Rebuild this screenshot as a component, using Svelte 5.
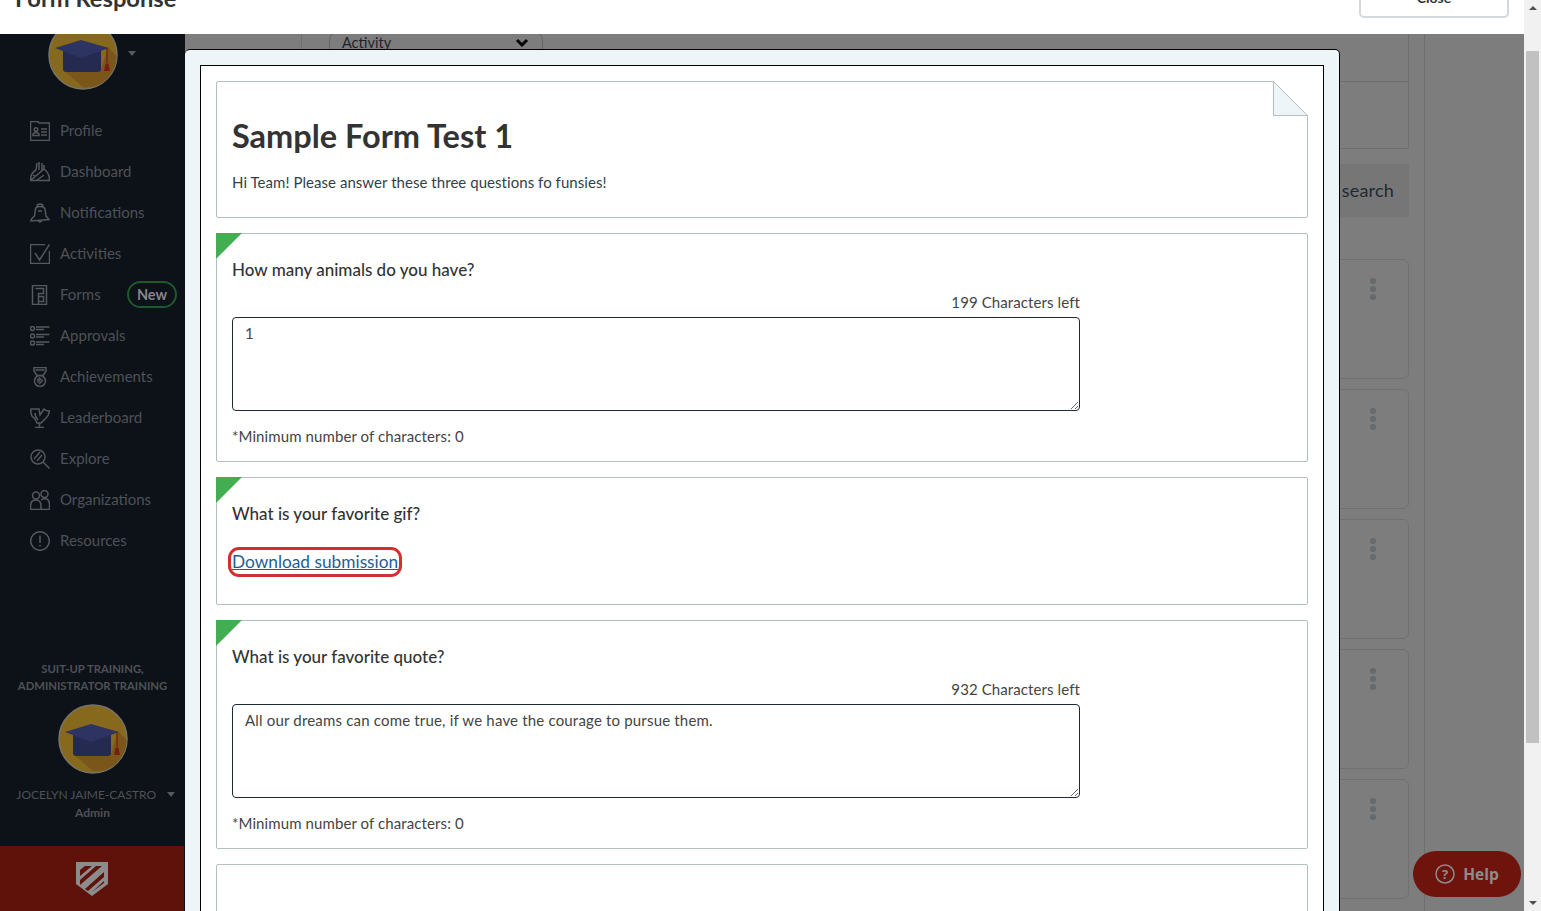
<svelte:options runes={true} />

<script>
  const navItems = [
    { label: 'Profile', icon: 'profile' },
    { label: 'Dashboard', icon: 'dashboard' },
    { label: 'Notifications', icon: 'bell' },
    { label: 'Activities', icon: 'check' },
    { label: 'Forms', icon: 'forms', isNew: true },
    { label: 'Approvals', icon: 'approvals' },
    { label: 'Achievements', icon: 'medal' },
    { label: 'Leaderboard', icon: 'trophy' },
    { label: 'Explore', icon: 'explore' },
    { label: 'Organizations', icon: 'people' },
    { label: 'Resources', icon: 'info' },
  ]

  const bgCards = [1, 2, 3, 4, 5]
</script>

{#snippet avatar()}
  <svg class="avatar" viewBox="0 0 70 70" aria-hidden="true">
    <circle cx="35" cy="35" r="34" fill="#86691c" stroke="#77746a" stroke-width="1.5" />
    <path d="M15 50 L35 67 Q47 69 58 60 Q69 48 68.500 36 L60 27 L53 50 Z" fill="#7b561a" />
    <path d="M15 26 H53 V49 Q53 52 50 52 H18 Q15 52 15 49 Z" fill="#252a50" />
    <path d="M7 28 L33 20 L61 28 L33 38 Z" fill="#2d3461" />
    <path d="M59 28 V44" stroke="#7a1d12" stroke-width="1.2" />
    <path d="M57.500 44 H60.500 L62 51 H56 Z" fill="#7a1d12" />
  </svg>
{/snippet}

{#snippet navIcon(name)}
  <svg class="nav-icon" viewBox="0 0 20 20" aria-hidden="true">
    {#if name === 'profile'}
      <path d="M.5 .5 H8 L9 2 H19.500 V19.500 H.5 Z M11 8 H17 M11 11 H17 M11 14 H17 M3 14.500 H9 V13 Q8 11.500 6 11.500 Q4 11.500 3 13 Z" />
      <circle cx="6" cy="8.500" r="1.800" />
    {:else if name === 'dashboard'}
      <path d="M.5 18.500 Q.5 11 6 8 L7 1 M9 8 V0 M12 8 V1 M14 8 V3 M14 7 Q19.500 11 19.500 18.500 H.5 Z M7 18 L14 13 M3 13 L5 14.500" />
    {:else if name === 'bell'}
      <path d="M7 3.500 Q7 1 10 1 Q13 1 13 3.500 M4.500 13 L5.500 6 Q6 3.500 10 3.500 Q14 3.500 15 6 L16 13 L19 16.500 L1 18 L1.500 16 Z M8 18 Q10 20 12 17.500 M8 8 H12" />
    {:else if name === 'check'}
      <path d="M15 .5 H.5 V19.500 H19.500 V7 M5 9 L9.500 16 L19.500 .5" />
    {:else if name === 'forms'}
      <path d="M2.500 .5 H16.500 V19.500 H2.500 Z M5.500 3.500 H13.500 V8.500 H8.500 V19 M8.500 11.500 H13.500 V16.500 H8.500" />
    {:else if name === 'approvals'}
      <circle cx="2.500" cy="2.500" r="2" />
      <circle cx="2.500" cy="10" r="2" />
      <circle cx="2.500" cy="17" r="2" />
      <path d="M6 1 H19.500 M6 3.500 H14 M6 8.500 H19.500 M6 11 H14 M6 16 H19.500 M6 18.500 H14" />
    {:else if name === 'medal'}
      <path d="M4 .5 H16 V4 L13 8.500 H7 L4 4 Z M5.500 3 H14.500" />
      <circle cx="10" cy="14" r="5.500" />
      <path d="M7.500 15.500 L11.500 11.500 M9 17 L13 13 M7 13.500 L10 10.500" />
    {:else if name === 'trophy'}
      <path d="M5 1 H1 Q.5 5 2 8 L5 11 L7 15 H11 L16 10 Q19 7 19.500 3 L16 2.500 M5 1 H9 L10 7 L14 1 L16 2.500 M5 5 Q5 9 8 12 M9.500 15 V19 M5 19.500 H14" />
    {:else if name === 'explore'}
      <circle cx="8" cy="8" r="7" />
      <path d="M13 13 L19.500 19.500 M4 10 L10 3 M7 12 L12 6" />
    {:else if name === 'people'}
      <circle cx="6" cy="5.500" r="3.500" />
      <circle cx="14.500" cy="4" r="3.500" />
      <path d="M.5 16 Q.5 10 6 10 Q11 10 11 16 V19.500 H.5 Z M11 10 Q13 8.500 15 8.500 Q19.500 9 19.500 15 V19.500 H11" />
    {:else if name === 'info'}
      <circle cx="10" cy="10" r="9.300" />
      <path d="M10 4.500 V12 M10 14 V15.500" />
    {/if}
  </svg>
{/snippet}

{#snippet triangle()}
  <svg class="triangle" viewBox="0 0 26 26" aria-hidden="true">
    <polygon points="0,0 26,0 0,26" fill="#43ad52" />
  </svg>
{/snippet}

<div class="page">
  <header class="topbar">
    <h1>Form Response</h1>
    <button class="close">Close</button>
  </header>

  <div class="content">
    <aside class="sidebar">
      <div class="brand">
        {@render avatar()}
        <span class="caret brand-caret"></span>
      </div>

      <nav>
        {#each navItems as item}
          <div class="nav-item">
            {@render navIcon(item.icon)}
            <span class="nav-label">{item.label}</span>
            {#if item.isNew}
              <span class="new-pill">New</span>
            {/if}
          </div>
        {/each}
      </nav>

      <div class="user">
        <div class="org">SUIT-UP TRAINING,<br />ADMINISTRATOR TRAINING</div>
        {@render avatar()}
        <div class="user-name">JOCELYN JAIME-CASTRO <span class="caret"></span></div>
        <div class="user-role">Admin</div>
      </div>

      <div class="shield-bar">
        <svg width="34" height="36" viewBox="0 0 34 36" aria-hidden="true">
          <path d="M1 1 H33 V23 L17 35 L1 23 Z" fill="#8c8c8c" />
          <path d="M5 15 L17 5 H10 L5 9 Z M5 24 L27 5 H21 L5 19 Z M10 28 L29 11 V16 L13 30 Z M17 31 L29 20 V22 L17 31 Z" fill="#5e120a" />
        </svg>
      </div>
    </aside>

    <main class="backdrop">
      <div class="bg-column">
        <div class="bg-top">
          <div class="bg-select">
            <span>Activity</span>
            <svg width="14" height="10" viewBox="0 0 14 10" aria-hidden="true">
              <path d="M2 2 L7 7 L12 2" fill="none" stroke="#000" stroke-width="3" />
            </svg>
          </div>
        </div>
        <div class="bg-row"></div>
        <div class="bg-search">search</div>
        <div class="bg-cards">
          {#each bgCards as card (card)}
            <div class="bg-card">
              <span class="dots"><i></i><i></i><i></i></span>
            </div>
          {/each}
        </div>
      </div>
    </main>
  </div>

  <section class="modal">
    <div class="modal-inner">
      <article class="card title-card">
        <svg class="fold" viewBox="0 0 35 35" aria-hidden="true">
          <polygon points="0,0 35,0 35,35" fill="#fff" />
          <polygon points=".5,.5 34.500,34.500 .5,34.500" fill="#eef5f8" stroke="#b6bfc0" />
        </svg>
        <h2>Sample Form Test 1</h2>
        <p>Hi Team! Please answer these three questions fo funsies!</p>
      </article>

      <article class="card">
        {@render triangle()}
        <h3>How many animals do you have?</h3>
        <div class="field">
          <div class="counter">199 Characters left</div>
          <textarea readonly>1</textarea>
        </div>
        <div class="minimum">*Minimum number of characters: 0</div>
      </article>

      <article class="card upload-card">
        {@render triangle()}
        <h3>What is your favorite gif?</h3>
        <a class="download" href="#submission">Download submission</a>
      </article>

      <article class="card">
        {@render triangle()}
        <h3>What is your favorite quote?</h3>
        <div class="field">
          <div class="counter">932 Characters left</div>
          <textarea readonly>All our dreams can come true, if we have the courage to pursue them.</textarea>
        </div>
        <div class="minimum">*Minimum number of characters: 0</div>
      </article>

      <article class="card empty-card"></article>
    </div>
  </section>

  <button class="help">
    <svg width="20" height="20" viewBox="0 0 20 20" aria-hidden="true">
      <circle cx="10" cy="10" r="9" fill="none" stroke="#8d8d8d" stroke-width="1.500" />
      <text x="10" y="14.500" text-anchor="middle" class="help-mark">?</text>
    </svg>
    Help
  </button>

  <div class="scrollbar">
    <span class="arrow up"></span>
    <div class="track"><div class="thumb"></div></div>
    <span class="arrow down"></span>
  </div>
</div>

<style>
  :global(body) {
    margin: 0;
    overflow: hidden;
    font-family: Lato, 'Noto Sans', sans-serif;
    color: #333f48;
  }

  .page {
    position: relative;
    width: 1541px;
    height: 911px;
    overflow: hidden;
    padding-right: 17px;
    box-sizing: border-box;
    display: flex;
    flex-direction: column;
  }

  .topbar {
    height: 34px;
    flex: none;
    display: flex;
    justify-content: space-between;
    align-items: flex-end;
    background: #fff;
    padding: 0 15px 0 15px;
  }

  .topbar h1 {
    margin: 0 0 21px;
    font-size: 23.700px;
    line-height: 30px;
    font-weight: 700;
    color: #333;
  }

  .close {
    width: 150px;
    height: 40px;
    margin-bottom: 16px;
    background: #fff;
    border: 2px solid #d3d8db;
    border-radius: 5px;
    font: 700 14px/14px Lato, sans-serif;
    color: #333;
    padding: 0;
  }

  .content {
    flex: 1;
    display: flex;
    min-height: 0;
  }

  .sidebar {
    width: 185px;
    flex: none;
    background: #0d1118;
    display: flex;
    flex-direction: column;
    overflow: hidden;
  }

  .avatar {
    display: block;
    width: 70px;
    height: 70px;
  }

  .brand {
    display: flex;
    align-items: center;
    margin: -14px 0 0 48px;
    gap: 4px;
  }

  .brand-caret {
    margin-bottom: 4px;
  }

  .caret {
    display: inline-block;
    width: 0;
    height: 0;
    border-left: 4.500px solid transparent;
    border-right: 4.500px solid transparent;
    border-top: 5px solid #55585c;
    vertical-align: 2px;
    margin-left: 6px;
  }

  nav {
    margin-top: 20px;
  }

  .nav-item {
    height: 41px;
    display: flex;
    align-items: center;
    padding-left: 30px;
    color: #4e5257;
    font-size: 15px;
  }

  .nav-icon {
    width: 20px;
    height: 20px;
    flex: none;
    fill: none;
    stroke: #55585c;
    stroke-width: 1.500;
  }

  .nav-label {
    margin: 0 0 2px 10px;
  }

  .new-pill {
    margin-left: auto;
    margin-right: 8px;
    width: 50px;
    height: 27px;
    box-sizing: border-box;
    border: 2px solid #1c5a2c;
    border-radius: 14px;
    display: flex;
    align-items: center;
    justify-content: center;
    font-weight: 700;
    font-size: 14.500px;
    color: #83878a;
  }

  .user {
    margin-top: auto;
    display: flex;
    flex-direction: column;
    align-items: center;
    color: #4e5257;
    font-size: 12px;
    text-align: center;
    padding-bottom: 24px;
  }

  .org {
    font-size: 11.300px;
    font-weight: 700;
    line-height: 17px;
    margin-bottom: 10px;
  }

  .user-name {
    margin-top: 12px;
    line-height: 18px;
    padding-left: 6px;
  }

  .user-name .caret {
    margin-left: 7.500px;
  }

  .user-role {
    line-height: 18px;
    font-weight: 700;
  }

  .shield-bar {
    height: 65px;
    flex: none;
    background: #5e120a;
    margin-right: 1px;
    display: flex;
    align-items: center;
    justify-content: center;
  }

  .backdrop {
    flex: 1;
    background: #7d7d7d;
    overflow: hidden;
    min-width: 0;
  }

  .bg-column {
    width: 1240px;
    height: 100%;
    box-sizing: border-box;
    border-right: 1px solid #6f6f6f;
    padding: 0 15px 0 116px;
    font-size: 16px;
  }

  .bg-top {
    display: flow-root;
    height: 48px;
    box-sizing: border-box;
    border-left: 1px solid #6f6f6f;
    border-right: 1px solid #6f6f6f;
    border-bottom: 1px solid #6f6f6f;
    padding-left: 27px;
  }

  .bg-select {
    width: 214px;
    height: 22px;
    margin-top: -2px;
    box-sizing: border-box;
    border: 1px solid #636363;
    border-radius: 8px;
    padding: 0 13px 0 12px;
    display: flex;
    justify-content: space-between;
    align-items: center;
    color: #1f252b;
    font-size: 14.500px;
    line-height: 18px;
  }

  .bg-row {
    height: 67px;
    box-sizing: border-box;
    border-right: 1px solid #6f6f6f;
    border-bottom: 1px solid #6f6f6f;
  }

  .bg-search {
    margin-top: 15px;
    height: 53px;
    background: #767676;
    display: flex;
    align-items: center;
    justify-content: flex-end;
    padding: 0 15px 2px 0;
    box-sizing: border-box;
    color: #1f2a33;
    font-size: 18px;
    letter-spacing: 0.2px;
  }

  .bg-cards {
    margin-top: 42px;
    display: flex;
    flex-direction: column;
    gap: 10px;
  }

  .bg-card {
    height: 120px;
    box-sizing: border-box;
    border: 1px solid #707070;
    border-radius: 6px;
    display: flex;
    justify-content: flex-end;
    padding: 18px 32px 0 0;
  }

  .dots {
    display: flex;
    flex-direction: column;
    gap: 2px;
  }

  .dots i {
    width: 6px;
    height: 6px;
    border-radius: 50%;
    background: #646a6e;
  }

  /* overlay */
  .modal {
    position: absolute;
    left: 185px;
    top: 49px;
    width: 1155px;
    height: 880px;
    box-sizing: border-box;
    background: #eef5f8;
    border: 1px solid #000;
    border-left: 0;
    border-radius: 5px;
    padding: 15px 15px 0 15px;
  }

  .modal-inner {
    height: 100%;
    box-sizing: border-box;
    background: #fff;
    border: 1px solid #000;
    padding: 15px;
    display: flex;
    flex-direction: column;
    gap: 15px;
  }

  .card {
    position: relative;
    flex: none;
    border: 1px solid #b6bfc0;
    border-radius: 2px;
    padding: 26px 15px 15px;
  }

  .title-card {
    padding: 34px 15px 25px;
  }

  .upload-card {
    padding-bottom: 30px;
  }

  .empty-card {
    height: 80px;
  }

  .fold {
    position: absolute;
    top: -1px;
    right: -1px;
    width: 35px;
    height: 35px;
  }

  .triangle {
    position: absolute;
    top: -1px;
    left: -1px;
    width: 26px;
    height: 26px;
  }

  h2 {
    margin: 0;
    font-size: 32.500px;
    line-height: 40px;
    font-weight: 700;
    color: #333;
  }

  .title-card p {
    margin: 16px 0 0;
    font-size: 15px;
    line-height: 20px;
    letter-spacing: 0.05px;
  }

  h3 {
    margin: 0;
    font-size: 17px;
    line-height: 20px;
    font-weight: 500;
    color: #333;
  }

  .field {
    width: 848px;
    margin-top: 12px;
  }

  .counter {
    text-align: right;
    font-size: 15px;
    line-height: 20px;
    margin-bottom: 5px;
    color: #444;
    letter-spacing: 0.1px;
  }

  textarea {
    display: block;
    width: 848px;
    height: 94px;
    box-sizing: border-box;
    border: 1px solid #1d2b38;
    border-radius: 4px;
    padding: 5px 12px;
    margin: 0;
    font: 15px/20px Lato, sans-serif;
    letter-spacing: 0.18px;
    color: #444;
    outline: none;
  }

  .minimum {
    margin-top: 15px;
    font-size: 15px;
    line-height: 20px;
    color: #444;
    letter-spacing: 0.1px;
  }

  .download {
    display: block;
    width: max-content;
    margin: 26px 0 0 -1px;
    padding: 0 1px;
    font-size: 17.300px;
    line-height: 24px;
    color: #1f5f94;
    text-decoration: underline;
    outline: 3px solid #d32f2f;
    border-radius: 8px;
  }

  .help {
    position: absolute;
    left: 1413px;
    top: 851px;
    width: 108px;
    height: 46px;
    border: 0;
    border-radius: 23px;
    background: #6f140c;
    color: #8d8d8d;
    font: 700 15.500px/20px 'Open Sans', sans-serif;
    display: flex;
    align-items: center;
    justify-content: center;
    gap: 8px;
    padding: 0;
  }

  .help-mark {
    font: 700 13px 'Open Sans', sans-serif;
    fill: #8d8d8d;
  }

  .scrollbar {
    position: absolute;
    top: 0;
    right: 0;
    width: 17px;
    height: 911px;
    background: #f1f1f1;
    display: flex;
    flex-direction: column;
    align-items: center;
  }

  .arrow {
    flex: none;
    width: 0;
    height: 0;
    border-left: 4px solid transparent;
    border-right: 4px solid transparent;
  }

  .arrow.up {
    margin-top: 6px;
    border-bottom: 4px solid #505050;
  }

  .arrow.down {
    margin-bottom: 6px;
    border-top: 4px solid #505050;
  }

  .track {
    flex: 1;
    width: 100%;
  }

  .thumb {
    margin: 41px 2px 0;
    height: 692px;
    background: #c1c1c1;
  }
</style>
